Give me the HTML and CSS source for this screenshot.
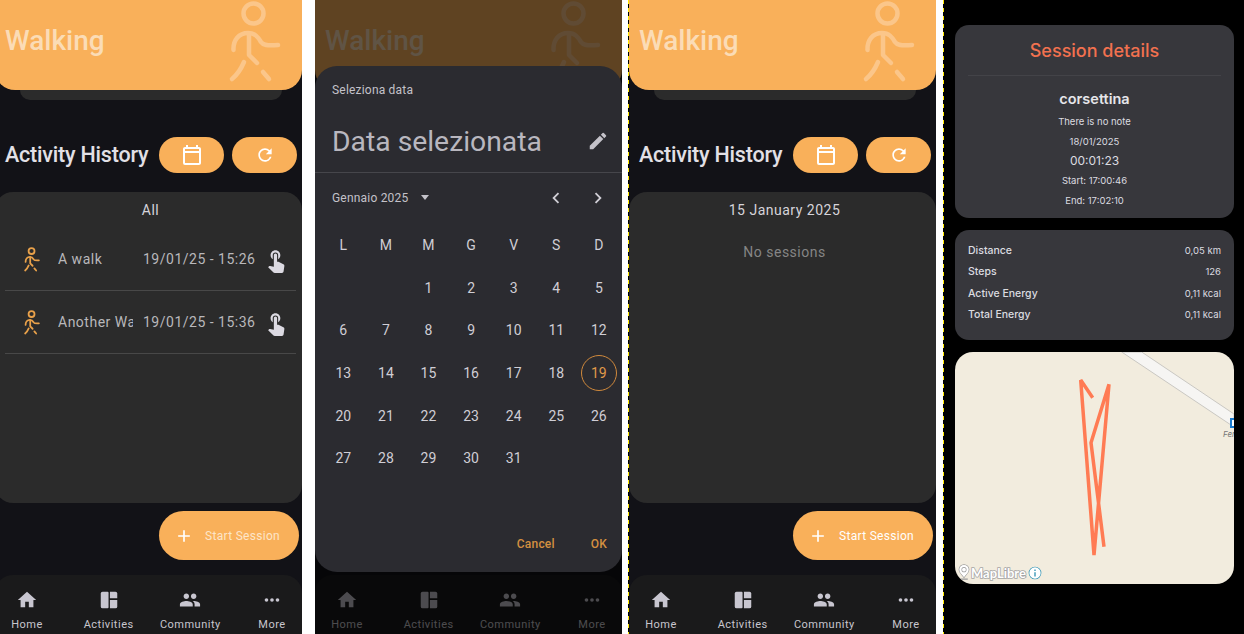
FILE: index.html
```html
<!DOCTYPE html>
<html lang="en">

<head>
    <meta charset="UTF-8">
    <meta name="viewport" content="width=device-width, initial-scale=1.0">
    <title>Walking - Activity History</title>
    <link rel="stylesheet" href="styles.css">
</head>

<body>
    <!-- Shared icons -->
    <svg class="icon-defs" aria-hidden="true">
        <symbol id="i-walker" viewBox="0 0 60 84">
            <g fill="none" stroke-linecap="round" stroke-linejoin="round">
                <circle cx="28.5" cy="13.5" r="10" />
                <path d="M8.5 50C8 40 14 33 23 33 30 33 33 37 36 42 38 45 42 46 53 45" />
                <path d="M24 34V55L32 63" />
                <path d="M19 62C16 69 12 75 7 79" />
                <path d="M38 72 44 79" />
            </g>
        </symbol>
        <symbol id="i-calendar" viewBox="0 0 24 24">
            <path d="M19 4h-1V2h-2v2H8V2H6v2H5c-1.11 0-2 .9-2 2v14a2 2 0 0 0 2 2h14c1.1 0 2-.9 2-2V6c0-1.1-.9-2-2-2zm0 16H5V10h14v10zm0-12H5V6h14v2z" />
        </symbol>
        <symbol id="i-refresh" viewBox="0 0 24 24">
            <path d="M17.65 6.35A7.958 7.958 0 0 0 12 4c-4.42 0-7.99 3.58-7.99 8s3.57 8 7.99 8c3.73 0 6.84-2.55 7.73-6h-2.08A5.99 5.99 0 0 1 12 18c-3.31 0-6-2.69-6-6s2.69-6 6-6c1.66 0 3.14.69 4.22 1.78L13 11h7V4l-2.35 2.35z" />
        </symbol>
        <symbol id="i-touch" viewBox="0 0 24 24">
            <path d="M9 11.24V7.5a2.5 2.5 0 0 1 5 0v3.74c1.21-.81 2-2.18 2-3.74C16 5.01 13.99 3 11.5 3S7 5.01 7 7.5c0 1.56.79 2.93 2 3.74zm9.84 4.63l-4.54-2.26c-.17-.07-.35-.11-.54-.11H13v-6c0-.83-.67-1.5-1.5-1.5S10 6.67 10 7.5v10.74l-3.43-.72c-.08-.01-.15-.03-.24-.03-.31 0-.59.13-.79.33l-.79.8 4.94 4.94c.27.27.65.44 1.06.44h6.79c.75 0 1.33-.55 1.44-1.28l.75-5.27c.01-.07.02-.14.02-.2 0-.62-.38-1.16-.91-1.38z" />
        </symbol>
        <symbol id="i-plus" viewBox="0 0 24 24">
            <path d="M19 13h-6v6h-2v-6H5v-2h6V5h2v6h6v2z" />
        </symbol>
        <symbol id="i-home" viewBox="0 0 24 24">
            <path d="M10 20v-6h4v6h5v-8h3L12 3 2 12h3v8z" />
        </symbol>
        <symbol id="i-activities" viewBox="0 0 24 24">
            <path d="M5 3h5.5a1 1 0 0 1 1 1v16a1 1 0 0 1-1 1H5a2 2 0 0 1-2-2V5a2 2 0 0 1 2-2z" />
            <path d="M13 3h6a2 2 0 0 1 2 2v5h-8z" />
            <path d="M13 12h8v7a2 2 0 0 1-2 2h-6z" />
        </symbol>
        <symbol id="i-group" viewBox="0 0 24 24">
            <path d="M16 11c1.66 0 2.99-1.34 2.99-3S17.66 5 16 5c-1.66 0-3 1.34-3 3s1.34 3 3 3zm-8 0c1.66 0 2.99-1.34 2.99-3S9.66 5 8 5C6.34 5 5 6.34 5 8s1.34 3 3 3zm0 2c-2.33 0-7 1.17-7 3.5V19h14v-2.5c0-2.33-4.67-3.5-7-3.5zm8 0c-.29 0-.62.02-.97.05 1.16.84 1.97 1.97 1.97 3.45V19h6v-2.5c0-2.33-4.67-3.5-7-3.5z" />
        </symbol>
        <symbol id="i-more" viewBox="0 0 24 24">
            <circle cx="6" cy="12" r="2" />
            <circle cx="12" cy="12" r="2" />
            <circle cx="18" cy="12" r="2" />
        </symbol>
        <symbol id="i-edit" viewBox="0 0 24 24">
            <path d="M3 17.25V21h3.75L17.81 9.94l-3.75-3.75L3 17.25zM20.71 7.04a.996.996 0 0 0 0-1.41l-2.34-2.34a.996.996 0 0 0-1.41 0l-1.83 1.83 3.75 3.75 1.83-1.83z" />
        </symbol>
        <symbol id="i-left" viewBox="0 0 24 24">
            <path d="M15.41 7.41 14 6l-6 6 6 6 1.41-1.41L10.83 12z" />
        </symbol>
        <symbol id="i-right" viewBox="0 0 24 24">
            <path d="M10 6 8.59 7.41 13.17 12l-4.58 4.59L10 18l6-6z" />
        </symbol>
    </svg>

    <div class="board">
        <!-- Activity list -->
        <section class="phone phone-first">
            <header class="hero">
                <h1>Walking</h1>
                <svg class="hero-figure"><use href="#i-walker" /></svg>
            </header>
            <div class="hero-peek"></div>
            <div class="history-head">
                <h2>Activity History</h2>
                <button class="pill"><svg><use href="#i-calendar" /></svg></button>
                <button class="pill"><svg class="small"><use href="#i-refresh" /></svg></button>
            </div>
            <div class="history-card">
                <div class="history-filter">All</div>
                <div class="session-row">
                    <svg class="walker"><use href="#i-walker" /></svg>
                    <span class="session-name">A walk</span>
                    <span class="session-date">19/01/25 - 15:26</span>
                    <svg class="touch"><use href="#i-touch" /></svg>
                </div>
                <div class="session-row">
                    <svg class="walker"><use href="#i-walker" /></svg>
                    <span class="session-name">Another Walk</span>
                    <span class="session-date">19/01/25 - 15:36</span>
                    <svg class="touch"><use href="#i-touch" /></svg>
                </div>
            </div>
            <button class="fab"><svg><use href="#i-plus" /></svg><span>Start Session</span></button>
            <nav class="tabbar">
                <a><svg><use href="#i-home" /></svg>Home</a>
                <a><svg><use href="#i-activities" /></svg>Activities</a>
                <a><svg><use href="#i-group" /></svg>Community</a>
                <a><svg><use href="#i-more" /></svg>More</a>
            </nav>
        </section>

        <div class="gap gap-wide"></div>

        <!-- Date picker open -->
        <section class="phone">
            <header class="hero">
                <h1>Walking</h1>
                <svg class="hero-figure"><use href="#i-walker" /></svg>
            </header>
            <div class="hero-peek"></div>
            <nav class="tabbar">
                <a><svg><use href="#i-home" /></svg>Home</a>
                <a><svg><use href="#i-activities" /></svg>Activities</a>
                <a><svg><use href="#i-group" /></svg>Community</a>
                <a><svg><use href="#i-more" /></svg>More</a>
            </nav>

            <div class="scrim"></div>
            <div class="picker">
                <div class="picker-label">Seleziona data</div>
                <div class="picker-head">
                    <span>Data selezionata</span>
                    <svg><use href="#i-edit" /></svg>
                </div>
                <div class="picker-month">
                    <span>Gennaio 2025</span>
                    <i class="caret"></i>
                    <svg class="chev-left"><use href="#i-left" /></svg>
                    <svg class="chev-right"><use href="#i-right" /></svg>
                </div>
                <div class="picker-grid">
                    <span>L</span><span>M</span><span>M</span><span>G</span><span>V</span><span>S</span><span>D</span>
                    <span></span><span></span><span>1</span><span>2</span><span>3</span><span>4</span><span>5</span>
                    <span>6</span><span>7</span><span>8</span><span>9</span><span>10</span><span>11</span><span>12</span>
                    <span>13</span><span>14</span><span>15</span><span>16</span><span>17</span><span>18</span><span class="today">19</span>
                    <span>20</span><span>21</span><span>22</span><span>23</span><span>24</span><span>25</span><span>26</span>
                    <span>27</span><span>28</span><span>29</span><span>30</span><span>31</span>
                </div>
                <div class="picker-actions">
                    <a>Cancel</a>
                    <a>OK</a>
                </div>
            </div>
        </section>

        <div class="gap"></div>
        <div class="dashes"></div>

        <!-- Date with no sessions -->
        <section class="phone">
            <header class="hero">
                <h1>Walking</h1>
                <svg class="hero-figure"><use href="#i-walker" /></svg>
            </header>
            <div class="hero-peek"></div>
            <div class="history-head">
                <h2>Activity History</h2>
                <button class="pill"><svg><use href="#i-calendar" /></svg></button>
                <button class="pill"><svg class="small"><use href="#i-refresh" /></svg></button>
            </div>
            <div class="history-card">
                <div class="history-filter">15 January 2025</div>
                <div class="no-sessions">No sessions</div>
            </div>
            <button class="fab fab-bright"><svg><use href="#i-plus" /></svg><span>Start Session</span></button>
            <nav class="tabbar">
                <a><svg><use href="#i-home" /></svg>Home</a>
                <a><svg><use href="#i-activities" /></svg>Activities</a>
                <a><svg><use href="#i-group" /></svg>Community</a>
                <a><svg><use href="#i-more" /></svg>More</a>
            </nav>
        </section>

        <div class="gap gap-last"></div>
        <div class="dashes"></div>

        <!-- Session details -->
        <section class="details">
            <div class="detail-card summary">
                <h3>Session details</h3>
                <div class="summary-name">corsettina</div>
                <div class="summary-line">There is no note</div>
                <div class="summary-line">18/01/2025</div>
                <div class="summary-time">00:01:23</div>
                <div class="summary-line">Start: 17:00:46</div>
                <div class="summary-line">End: 17:02:10</div>
            </div>
            <div class="detail-card stats">
                <div class="stat"><span>Distance</span><b>0,05 km</b></div>
                <div class="stat"><span>Steps</span><b>126</b></div>
                <div class="stat"><span>Active Energy</span><b>0,11 kcal</b></div>
                <div class="stat"><span>Total Energy</span><b>0,11 kcal</b></div>
            </div>
            <div class="map">
                <svg class="map-lines" viewBox="0 0 279 232">
                    <path class="road" d="M166.7 0H186.7L279 62V75Z" />
                    <path class="track" d="M137.7 45.7 125.7 28 139 203 154 32.3 136 90.7 149 194.7" />
                </svg>
                <i class="bus-stop"></i>
                <span class="stop-name">Fer</span>
                <div class="map-credit">
                    <svg class="map-pin" viewBox="0 0 12 18">
                        <path d="M6 1a5 5 0 0 0-5 5c0 3 3 5 5 8 2-3 5-5 5-8a5 5 0 0 0-5-5z" />
                        <circle cx="6" cy="6" r="2" />
                        <path d="M2 16h8" />
                    </svg>
                    <span>MapLibre</span>
                    <svg class="map-info" viewBox="0 0 14 14">
                        <circle cx="7" cy="7" r="5.7" />
                        <path d="M7 6.3V10.4M7 3.6V5" />
                    </svg>
                </div>
            </div>
        </section>
    </div>
</body>

</html>
```

FILE: styles.css
```css
:root {
    --orange: #f9b05a;
    --ink: #121217;
    --card: #2b2b2b;
    --soft: #c8c6cc;
}

* {
    margin: 0;
    padding: 0;
    box-sizing: border-box;
}

body {
    background: #fff;
    font-family: 'Roboto', sans-serif;
    overflow: hidden;
}

.icon-defs {
    display: none;
}

.board {
    display: flex;
    width: 1244px;
    height: 634px;
    overflow: hidden;
}

.phone {
    flex: 0 0 307px;
    height: 634px;
    position: relative;
    background: var(--ink);
    overflow: hidden;
    display: flex;
    flex-direction: column;
}

.phone-first {
    margin-left: -5px;
}

.gap {
    flex: 0 0 6px;
}

.gap-wide {
    flex-basis: 13px;
}

.gap-last {
    flex-basis: 7px;
}

.dashes {
    flex: 0 0 1px;
    background: repeating-linear-gradient(#ffeb00 0 4px, #000 4px 8px);
}

/* Hero */
.hero {
    height: 90px;
    flex: none;
    position: relative;
    background: var(--orange);
    border-radius: 0 0 20px 20px;
    padding: 23px 0 0 10px;
}

.hero h1 {
    font-size: 28px;
    line-height: 36px;
    font-weight: 500;
    color: #fbdcb6;
}

.hero-figure {
    position: absolute;
    top: 0;
    left: 230px;
    width: 60px;
    height: 84px;
    stroke: #fbc68a;
    stroke-width: 4.5px;
}

.hero-peek {
    height: 10px;
    flex: none;
    margin: 0 20px 0 25px;
    background: var(--card);
    border-radius: 0 0 14px 14px;
}

/* History header */
.history-head {
    display: flex;
    align-items: center;
    height: 36px;
    margin: 37px 0 19px 10px;
    flex: none;
}

.history-head h2 {
    font-size: 21.5px;
    line-height: 36px;
    font-weight: 500;
    letter-spacing: -.2px;
    color: #e2e0e6;
    flex: 0 0 154px;
    white-space: nowrap;
}

.pill {
    flex: 0 0 65px;
    height: 36px;
    margin-right: 8px;
    border: none;
    border-radius: 18px;
    background: var(--orange);
    display: flex;
    align-items: center;
    justify-content: center;
    fill: #fff;
}

.pill svg {
    width: 24px;
    height: 24px;
}

.pill svg.small {
    width: 20px;
    height: 20px;
}

/* History card */
.history-card {
    height: 311px;
    flex: none;
    background: var(--card);
    border-radius: 18px;
    padding-top: 9px;
}

.history-filter {
    text-align: center;
    font-size: 14px;
    line-height: 18px;
    letter-spacing: .5px;
    padding-left: 4px;
    color: #d6d4da;
    height: 27px;
}

.session-row {
    display: flex;
    align-items: center;
    height: 63px;
    margin: 0 6px 0 10px;
    padding-left: 18px;
    border-bottom: 1px solid #484848;
    color: #b9b8bb;
    font-size: 14px;
    letter-spacing: .5px;
}

.walker {
    width: 18px;
    height: 25px;
    flex: none;
    margin-right: 17px;
    stroke: #e9a14a;
    stroke-width: 6px;
}

.session-name {
    width: 75px;
    flex: none;
    margin-right: 10px;
    overflow: hidden;
    white-space: nowrap;
}

.session-date {
    width: 125px;
    flex: none;
    white-space: nowrap;
}

.touch {
    width: 26px;
    height: 26px;
    flex: none;
    margin: 2px 0 0 -5px;
    fill: #dcdae2;
}

.no-sessions {
    text-align: center;
    font-size: 14px;
    line-height: 18px;
    margin-top: 15px;
    padding-left: 4px;
    letter-spacing: .5px;
    color: #858585;
}

/* Start session */
.fab {
    position: absolute;
    top: 511px;
    left: 164px;
    width: 140px;
    height: 49px;
    border: none;
    border-radius: 25px;
    background: var(--orange);
    display: flex;
    align-items: center;
    padding-left: 15px;
    font-family: inherit;
    font-size: 12px;
    letter-spacing: .3px;
    color: #fde5c8;
    fill: #fff;
}

.fab svg {
    width: 20px;
    height: 20px;
    margin-right: 11px;
}

.fab-bright {
    color: #fff;
}

/* Bottom navigation */
.tabbar {
    position: absolute;
    top: 575px;
    left: 0;
    right: 0;
    height: 59px;
    display: flex;
    justify-content: space-between;
    padding-left: 2px;
    background: #1a1a1b;
    border-radius: 18px 18px 0 0;
}

.tabbar a {
    width: 60px;
    display: flex;
    flex-direction: column;
    align-items: center;
    padding-top: 14px;
    font-size: 11px;
    line-height: 13px;
    letter-spacing: .5px;
    white-space: nowrap;
    color: #c8c6ce;
    fill: #c8c6d0;
}

.tabbar svg {
    width: 22px;
    height: 22px;
    margin-bottom: 7px;
}

/* Date picker */
.scrim {
    position: absolute;
    inset: 0;
    background: rgba(0, 0, 0, .62);
}

.picker {
    position: absolute;
    top: 66px;
    left: 0;
    width: 307px;
    height: 506px;
    background: #2b2b30;
    border-radius: 22px;
    padding: 16px 7px 0;
}

.picker-label {
    margin-left: 10px;
    font-size: 12px;
    line-height: 16px;
    letter-spacing: .2px;
    color: #c4c2c9;
}

.picker-head {
    display: flex;
    align-items: center;
    justify-content: space-between;
    height: 40px;
    margin: 23px 0 0 10px;
    padding-right: 6px;
    font-size: 28.3px;
    color: #b9b7bf;
    fill: #c4c2c9;
}

.picker-head svg {
    width: 22px;
    height: 22px;
}

.picker-month {
    display: flex;
    align-items: center;
    height: 50px;
    margin: 11px -7px 0;
    padding-left: 17px;
    border-top: 1px solid #46464b;
    font-size: 12px;
    letter-spacing: .2px;
    color: #c4c2c9;
    fill: #d0ced5;
    position: relative;
}

.caret {
    margin-left: 13px;
    border: 4.5px solid transparent;
    border-top: 5px solid #c4c2c9;
    border-bottom: 0;
}

.chev-left,
.chev-right {
    position: absolute;
    top: 14px;
    width: 22px;
    height: 22px;
}

.chev-left {
    left: 230px;
}

.chev-right {
    left: 272px;
}

.picker-grid {
    display: grid;
    grid-template-columns: repeat(7, 42.6px);
    grid-auto-rows: 42.6px;
    margin-top: 2px;
    align-items: center;
    justify-items: center;
    font-size: 14px;
    color: #d0ced5;
}

.today {
    width: 36px;
    height: 36px;
    display: flex;
    align-items: center;
    justify-content: center;
    border: 1px solid #d0893c;
    border-radius: 50%;
    color: #e09a4a;
}

.picker-actions {
    display: flex;
    justify-content: flex-end;
    gap: 36px;
    position: absolute;
    right: 15px;
    bottom: 20px;
    font-size: 12px;
    line-height: 16px;
    font-weight: 500;
    letter-spacing: .2px;
    color: #d49040;
}

/* Session details */
.details {
    flex: 1;
    height: 634px;
    background: #000;
    padding: 25px 10px 0 11px;
    font-family: 'Inter', sans-serif;
    color: #dcdce0;
}

.detail-card {
    background: #37373c;
    border-radius: 14px;
    margin-bottom: 12px;
}

.summary {
    height: 193px;
    text-align: center;
    padding: 1px 13px 0;
}

.summary h3 {
    font-size: 18px;
    font-weight: 500;
    line-height: 49px;
    color: #f2714f;
    border-bottom: 1px solid #434348;
    margin-bottom: 13px;
}

.summary-name {
    font-size: 14.5px;
    font-weight: 600;
    line-height: 20px;
    margin-bottom: 3px;
    color: #e6e6ea;
}

.summary-line {
    font-size: 9.5px;
    line-height: 19.5px;
}

.summary-time {
    font-size: 12px;
    line-height: 20px;
}

.stats {
    height: 110px;
    padding: 10px 13px 0;
}

.stat {
    display: flex;
    justify-content: space-between;
    align-items: center;
    height: 21.3px;
    font-size: 10.5px;
    font-weight: 500;
}

.stat b {
    font-size: 9.5px;
    font-weight: 400;
}

.map {
    height: 232px;
    position: relative;
    border-radius: 18px;
    background: #f2ecde;
    overflow: hidden;
}

.map-lines {
    display: block;
    width: 279px;
    height: 232px;
}

.road {
    fill: #f6f5f3;
    stroke: #c9c7c2;
    stroke-width: 1px;
}

.track {
    fill: none;
    stroke: #ff7b54;
    stroke-width: 3.5px;
    stroke-linejoin: bevel;
}

.bus-stop {
    position: absolute;
    top: 66px;
    left: 275px;
    width: 10px;
    height: 10px;
    border: 2px solid #1b7cd0;
    background: #fff;
}

.stop-name {
    position: absolute;
    top: 77px;
    left: 268px;
    font-size: 8px;
    font-style: italic;
    color: #777;
}

.map-credit {
    position: absolute;
    left: 3px;
    bottom: 3px;
    display: flex;
    align-items: center;
    gap: 2px;
    font-family: 'Lato', sans-serif;
    font-size: 13px;
    font-weight: 700;
    color: #fff;
    -webkit-text-stroke: 1.6px #a5a5a5;
    paint-order: stroke fill;
}

.map-credit span {
    margin-left: -1px;
}

.map-pin {
    width: 12px;
    height: 17px;
    fill: #fff;
    stroke: #999;
    stroke-width: 1.4px;
}

.map-info {
    width: 14px;
    height: 14px;
    fill: #fff;
    stroke: #2a8fb0;
    stroke-width: 1.3px;
}
```
